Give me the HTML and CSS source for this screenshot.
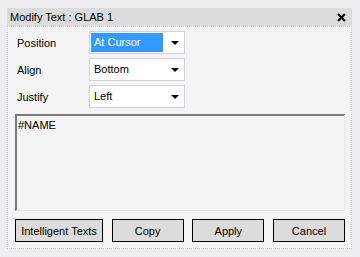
FILE: index.html
```html
<!DOCTYPE html>
<html lang="en">
<head>
    <meta charset="UTF-8">
    <title>Modify Text</title>
    <link rel="stylesheet" href="styles.css">
</head>
<body>
    <div class="dialog">
        <div class="titlebar">
            <div class="title">Modify Text : GLAB 1</div>
            <div class="close">
                <svg width="9" height="9" viewBox="0 0 9 9">
                    <path d="M1 1 L8 8 M8 1 L1 8" stroke="#000" stroke-width="2.2" fill="none"/>
                </svg>
            </div>
        </div>

        <div class="content">
            <div class="fields">
                <div class="label">Position</div>
                <div class="combo">
                    <span class="value selected">At Cursor</span>
                    <span class="arrow"></span>
                </div>

                <div class="label">Align</div>
                <div class="combo">
                    <span class="value">Bottom</span>
                    <span class="arrow"></span>
                </div>

                <div class="label">Justify</div>
                <div class="combo">
                    <span class="value">Left</span>
                    <span class="arrow"></span>
                </div>
            </div>

            <div class="text-box">#NAME</div>

            <div class="buttons">
                <button class="btn wide">Intelligent Texts</button>
                <button class="btn">Copy</button>
                <button class="btn">Apply</button>
                <button class="btn">Cancel</button>
            </div>
        </div>
    </div>
</body>
</html>
```

FILE: styles.css
```css
* {
    margin: 0;
    padding: 0;
    box-sizing: border-box;
    font-family: "Liberation Sans", Arial, sans-serif;
}

body {
    background-color: #efeff2;
    color: #000;
    font-size: 11px;
    padding: 8px 8px 0 7px;
}

.dialog {
    width: 345px;
}

.titlebar {
    height: 18px;
    background: #dcdcdc;
    display: flex;
    justify-content: space-between;
    align-items: center;
    padding: 0 6px 0 3px;
}

.title {
    font-size: 11px;
}

.close svg {
    display: block;
}

.content {
    background: #f4f4f4;
    border: 1px dotted #cdcdcd;
    padding: 4px 6px 6px 7px;
}

.fields {
    display: grid;
    grid-template-columns: 74px 96px;
    grid-auto-rows: 23px;
    row-gap: 4px;
}

.label {
    display: flex;
    align-items: center;
    padding-left: 2px;
}

.combo {
    background: #fff;
    border: 1px solid #cfd3da;
    display: flex;
    align-items: center;
    justify-content: space-between;
    padding: 0 5px 0 1px;
}

.value {
    height: 19px;
    line-height: 19px;
    padding-left: 3px;
    flex: 1;
    margin-right: 8px;
}

.value.selected {
    background: #3399ff;
    color: #fff;
}

.arrow {
    width: 0;
    height: 0;
    border-left: 4px solid transparent;
    border-right: 4px solid transparent;
    border-top: 4px solid #000;
}

.text-box {
    margin-top: 6px;
    height: 97px;
    border-top: 2px solid #7a7a7a;
    border-left: 2px solid #7a7a7a;
    border-right: 1px solid #e6e6e6;
    border-bottom: 1px solid #e6e6e6;
    padding: 3px 1px;
    font-size: 11px;
}

.buttons {
    margin-top: 8px;
    display: flex;
    justify-content: space-between;
}

.btn {
    width: 72px;
    height: 23px;
    background: #dcdcdc;
    border: 1px solid #000;
    font-size: 11px;
    color: #000;
}

.btn.wide {
    width: 88px;
}
```
